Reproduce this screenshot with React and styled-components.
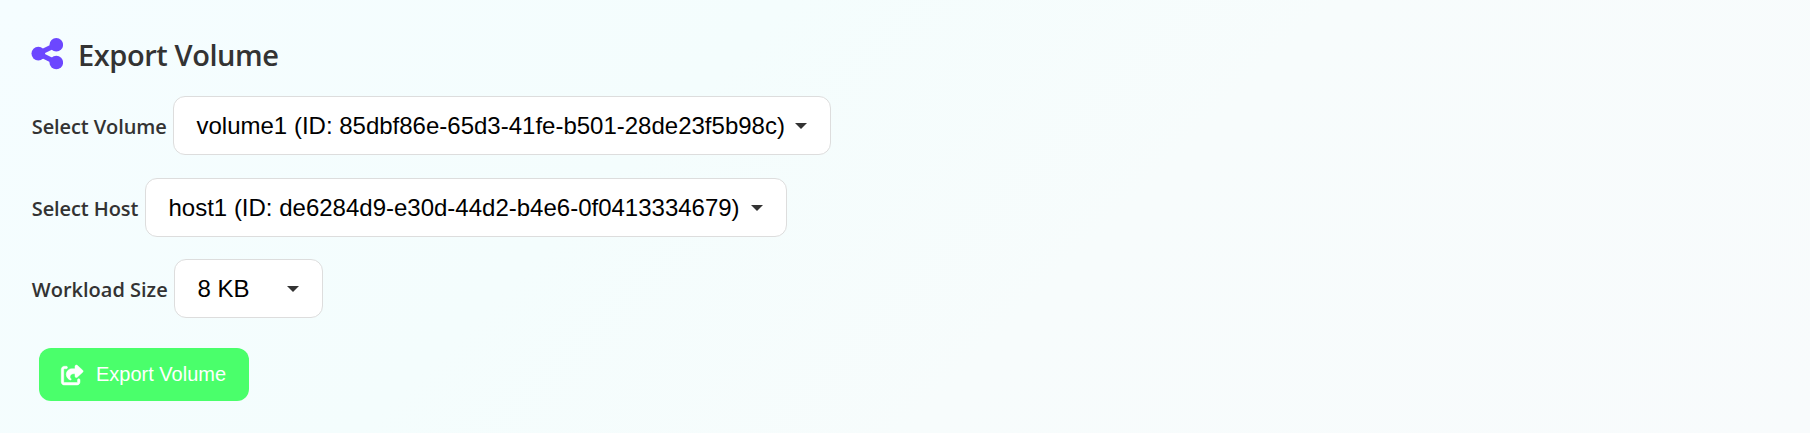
import React from "react";
import styled, { createGlobalStyle } from "styled-components";
import { FaShareFromSquare } from "react-icons/fa6";

const GlobalStyle = createGlobalStyle`
  * { box-sizing: border-box; }
  body { margin: 0; }
`;

const Panel = styled.main`
  display: flex;
  flex-direction: column;
  align-items: flex-start;
  min-height: 433px;
  padding: 36px 31px 32px;
  color: #333;
  font-family: "Segoe UI", "Open Sans", "Noto Sans", sans-serif;
  background: linear-gradient(135deg, #f5fdff 0%, #f4fdfd 35%, #f7fcfc 60%, #f8fbfc 100%);
`;

const Title = styled.h2`
  display: flex;
  align-items: center;
  gap: 15px;
  height: 40px;
  margin: 0 0 20px;
  font-size: 29px;
  font-weight: 600;
  line-height: 40px;
  white-space: nowrap;
`;

const TitleIcon = styled.svg`
  flex: none;
  width: 32px;
  height: 32px;
  margin-bottom: 5px;
  fill: #6c47ff;
  stroke: #6c47ff;
`;

const TitleText = styled.span`
  margin-top: -2px;
  letter-spacing: -0.42px;
`;

const Field = styled.div`
  display: flex;
  align-items: center;
  height: 59px;
  margin-bottom: ${({ $gap }) => $gap}px;
`;

const Label = styled.label`
  width: ${({ $width }) => $width}px;
  padding: 1px 0 0 0.8px;
  font-size: 20px;
  font-weight: 600;
  letter-spacing: ${({ $tracking }) => $tracking}px;
  white-space: nowrap;
`;

const SelectBox = styled.div`
  display: flex;
  align-items: center;
  justify-content: space-between;
  width: ${({ $width }) => $width}px;
  height: 59px;
  padding: 0 23px 0 22.5px;
  border: 1px solid #ddd;
  border-radius: 12px;
  background: #fff;
  color: #000;
  font: 24px/28px "Liberation Sans", Arial, sans-serif;
  white-space: nowrap;

  svg {
    flex: none;
    width: 12px;
    height: 6px;
    fill: #333;
  }
`;

const ExportButton = styled.button`
  display: flex;
  align-items: center;
  gap: 12px;
  width: 210px;
  height: 53px;
  margin: 0 0 0 8px;
  padding: 0 22px;
  border: 0;
  border-radius: 12px;
  background: #4aff6b;
  color: #fff;
  font: 20px/24px "Liberation Sans", Arial, sans-serif;
  white-space: nowrap;

  svg {
    flex: none;
    width: 23px;
    height: 20px;
    overflow: visible;
    stroke: #fff;
    stroke-width: 12px;
  }
`;

const ButtonText = styled.span`
  padding-bottom: 2px;
`;

const fields = [
  { label: "Select Volume", value: "volume1 (ID: 85dbf86e-65d3-41fe-b501-28de23f5b98c)", labelWidth: 142, width: 658, gap: 23, tracking: -0.1 },
  { label: "Select Host", value: "host1 (ID: de6284d9-e30d-44d2-b4e6-0f0413334679)", labelWidth: 114, width: 642, gap: 22, tracking: -0.1 },
  { label: "Workload Size", value: "8 KB", labelWidth: 143, width: 149, gap: 30, tracking: 0 },
];

export default function App() {
  return (
    <>
      <GlobalStyle />
      <Panel>
        <Title>
          <TitleIcon viewBox="0 0 32 32">
            <path d="M25.4 6.7L7.3 15.6l18.1 8.8" fill="none" strokeWidth="5" />
            <g stroke="none">
              <circle cx="7.3" cy="15.6" r="6.8" />
              <circle cx="25.3" cy="6.8" r="6.8" />
              <circle cx="25.3" cy="24.5" r="6.8" />
            </g>
          </TitleIcon>
          <TitleText>Export Volume</TitleText>
        </Title>
        {fields.map((f) => (
          <Field key={f.label} $gap={f.gap}>
            <Label $width={f.labelWidth} $tracking={f.tracking}>{f.label}</Label>
            <SelectBox $width={f.width}>
              <span>{f.value}</span>
              <svg viewBox="0 0 12 6"><path d="M0 0h12L6 6z" /></svg>
            </SelectBox>
          </Field>
        ))}
        <ExportButton type="button">
          <FaShareFromSquare />
          <ButtonText>Export Volume</ButtonText>
        </ExportButton>
      </Panel>
    </>
  );
}
